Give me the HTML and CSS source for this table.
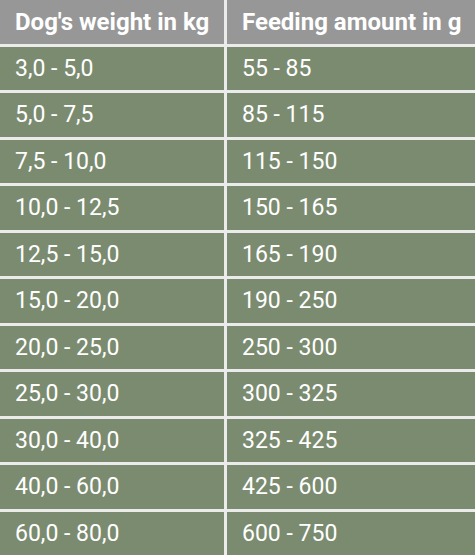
FILE: index.html
```html
<!DOCTYPE html>
<html lang="en">
<head>
<meta charset="utf-8">
<title>Feeding table</title>
<link rel="stylesheet" href="styles.css">
</head>
<body>
<div class="table">
  <div class="cell head">Dog's weight in kg</div>
  <div class="cell head">Feeding amount in g</div>
  <div class="cell">3,0 - 5,0</div><div class="cell">55 - 85</div>
  <div class="cell">5,0 - 7,5</div><div class="cell">85 - 115</div>
  <div class="cell">7,5 - 10,0</div><div class="cell">115 - 150</div>
  <div class="cell">10,0 - 12,5</div><div class="cell">150 - 165</div>
  <div class="cell">12,5 - 15,0</div><div class="cell">165 - 190</div>
  <div class="cell">15,0 - 20,0</div><div class="cell">190 - 250</div>
  <div class="cell">20,0 - 25,0</div><div class="cell">250 - 300</div>
  <div class="cell">25,0 - 30,0</div><div class="cell">300 - 325</div>
  <div class="cell">30,0 - 40,0</div><div class="cell">325 - 425</div>
  <div class="cell">40,0 - 60,0</div><div class="cell">425 - 600</div>
  <div class="cell">60,0 - 80,0</div><div class="cell">600 - 750</div>
</div>
</body>
</html>
```
FILE: styles.css
```css
html, body {
  margin: 0;
  padding: 0;
  background: #ebebeb;
}
.table {
  width: 475px;
  display: grid;
  grid-template-columns: 224px 248px;
  grid-auto-rows: 43.5px;
  gap: 3px;
  background: #ebebeb;
  font-family: Roboto, "Liberation Sans", sans-serif;
  font-size: 23px;
  color: #ffffff;
}
.cell {
  background: #7b8b70;
  display: flex;
  align-items: center;
  padding: 0 15px;
  white-space: nowrap;
}
.head {
  background: #979797;
  font-weight: 700;
  font-size: 24px;
}
```
